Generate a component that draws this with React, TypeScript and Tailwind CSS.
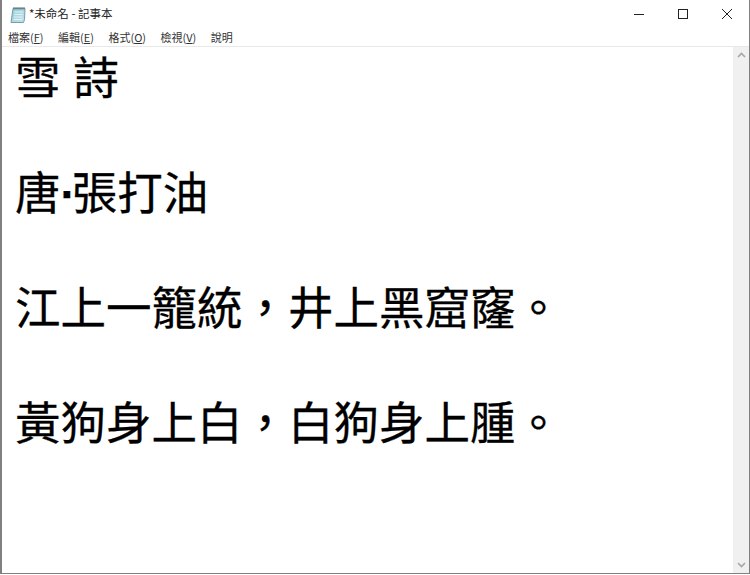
import React from 'react';

const menus = [
  { label: '檔案', key: 'F' },
  { label: '編輯', key: 'E' },
  { label: '格式', key: 'O' },
  { label: '檢視', key: 'V' },
  { label: '說明', key: '' },
];

const NotepadIcon = () => (
  <svg width="17" height="17" viewBox="0 0 17 17" className="shrink-0">
    <defs>
      <linearGradient id="pad" x1="0" y1="0" x2="1" y2="1">
        <stop offset="0" stopColor="#8fd0d8" />
        <stop offset="1" stopColor="#c5e3ee" />
      </linearGradient>
    </defs>
    <path d="M4 2.500h12l-.5 11-1 3H2z" fill="url(#pad)" stroke="#7d9aa6" strokeWidth="1" />
    <path d="M5.500 6h8.500M5.200 8.500h8.500M4.900 11h8.500M4.600 13.500h8.500" stroke="#e3f1f5" strokeWidth="1" />
    <path d="M5 1v2.500M7 1v2.500M9 1v2.500M11 1v2.500M13 1v2.500M15 1v2.500" stroke="#5b6a6a" strokeWidth="1" />
  </svg>
);

export default function App() {
  return (
    <div className="w-[750px] h-[574px] bg-white flex flex-col border-l-2 border-r border-b border-[#808080] overflow-hidden font-['Noto_Sans_CJK_TC','Noto_Sans',sans-serif]">
      {/* Title bar */}
      <div className="h-[28px] shrink-0 flex items-center pl-[7px]">
        <NotepadIcon />
        <span className="ml-[3px] text-[11.5px] text-[#222]">*未命名 - 記事本</span>
        <div className="ml-auto flex items-center text-[#222]">
          <button className="w-[44px] h-[28px] flex items-center justify-center">
            <svg width="10" height="10" viewBox="0 0 10 10"><path d="M0 5.500h10" stroke="currentColor" /></svg>
          </button>
          <button className="w-[44px] h-[28px] flex items-center justify-center">
            <svg width="10" height="10" viewBox="0 0 10 10"><rect x="0.5" y="0.5" width="9" height="9" fill="none" stroke="currentColor" /></svg>
          </button>
          <button className="w-[44px] h-[28px] flex items-center justify-center">
            <svg width="10" height="10" viewBox="0 0 10 10"><path d="M0 0l10 10M10 0L0 10" stroke="currentColor" /></svg>
          </button>
        </div>
      </div>

      {/* Menu bar */}
      <div className="h-[18px] shrink-0 flex items-center pl-[6px] gap-[14.5px] text-[11px] text-[#333]">
        {menus.map((m) => (
          <span key={m.label}>
            {m.label}
            {m.key && (
              <>
                (<span className="underline">{m.key}</span>)
              </>
            )}
          </span>
        ))}
      </div>

      {/* Editor */}
      <div className="flex-1 min-h-0 flex border-t border-[#e8e8e8]">
        <div className="flex-1 pl-[13px] pt-[4px] text-[45.5px] leading-[57.5px] text-black whitespace-pre [-webkit-text-stroke:0.3px_#000] font-['Liberation_Sans','Noto_Sans_CJK_TC',sans-serif]">
          <div className="h-[57.5px]">雪 詩</div>
          <div className="h-[57.5px]" />
          <div className="h-[57.5px]">唐<span className="font-bold tracking-[-4px]">·</span>張打油</div>
          <div className="h-[57.5px]" />
          <div className="h-[57.5px]">江上一籠統，井上黑窟窿。</div>
          <div className="h-[57.5px]" />
          <div className="h-[57.5px]">黃狗身上白，白狗身上腫。</div>
        </div>
        <div className="w-[16px] shrink-0 bg-[#f0f0f0] flex flex-col items-center justify-between py-[5px] text-[#a6a6a6]">
          <svg width="9" height="6" viewBox="0 0 9 6"><path d="M1 5l3.500-3.500L8 5" fill="none" stroke="currentColor" strokeWidth="1.600" /></svg>
          <svg width="9" height="6" viewBox="0 0 9 6"><path d="M1 1l3.500 3.500L8 1" fill="none" stroke="currentColor" strokeWidth="1.600" /></svg>
        </div>
      </div>
    </div>
  );
}
